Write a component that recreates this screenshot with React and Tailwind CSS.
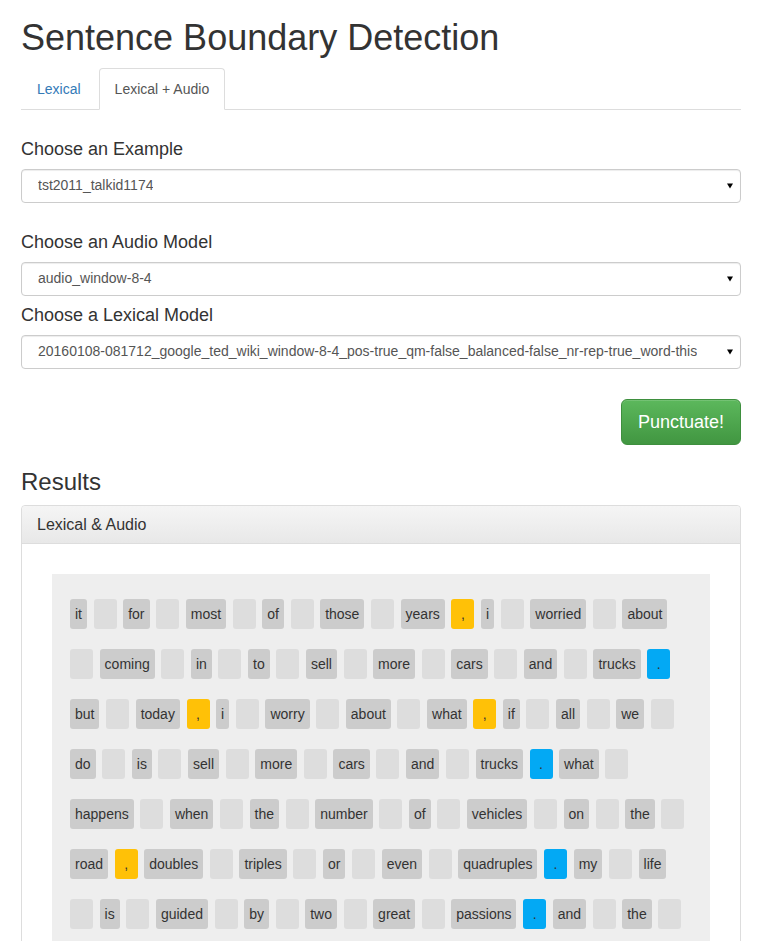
import React from 'react';

const rows = [
  ['it', '_', 'for', '_', 'most', '_', 'of', '_', 'those', '_', 'years', ',', 'i', '_', 'worried', '_', 'about'],
  ['_', 'coming', '_', 'in', '_', 'to', '_', 'sell', '_', 'more', '_', 'cars', '_', 'and', '_', 'trucks', '.'],
  ['but', '_', 'today', ',', 'i', '_', 'worry', '_', 'about', '_', 'what', ',', 'if', '_', 'all', '_', 'we', '_'],
  ['do', '_', 'is', '_', 'sell', '_', 'more', '_', 'cars', '_', 'and', '_', 'trucks', '.', 'what', '_'],
  ['happens', '_', 'when', '_', 'the', '_', 'number', '_', 'of', '_', 'vehicles', '_', 'on', '_', 'the', '_'],
  ['road', ',', 'doubles', '_', 'triples', '_', 'or', '_', 'even', '_', 'quadruples', '.', 'my', '_', 'life'],
  ['_', 'is', '_', 'guided', '_', 'by', '_', 'two', '_', 'great', '_', 'passions', '.', 'and', '_', 'the', '_'],
];

const Token = ({ t }) => {
  if (t === '_') return <span className="h-[30px] w-[23px] shrink-0 rounded-[3px] bg-[#dddddd]"></span>;
  if (t === ',')
    return <span className="h-[30px] w-[23px] shrink-0 rounded-[3px] bg-[#ffc107] text-center leading-[30px]">,</span>;
  if (t === '.')
    return <span className="h-[30px] w-[23px] shrink-0 rounded-[3px] bg-[#03a9f4] text-center leading-[30px]">.</span>;
  return <span className="h-[30px] shrink-0 rounded-[3px] bg-[#cccccc] px-[5px] leading-[30px]">{t}</span>;
};

const SelectBox = ({ value }) => (
  <div className="flex h-[34px] items-center justify-between rounded-[4px] border border-[#cccccc] bg-white pl-[16px] pr-[7px] text-[14px] text-[#555555] shadow-[inset_0_1px_1px_rgba(0,0,0,0.075)]">
    <span className="truncate">{value}</span>
    <svg width="6" height="6" viewBox="0 0 6 6" className="ml-2 shrink-0">
      <path d="M0 0.5 L6 0.5 L3 5.5 Z" fill="#000" />
    </svg>
  </div>
);

export default function App() {
  return (
    <div className="min-h-screen bg-white font-['Liberation_Sans',Arial,sans-serif] text-[#333333]">
      <div className="ml-[21px] w-[720px] pt-[18px]">
        <h1 className="mb-[10px] text-[36px] leading-[39.6px]">Sentence Boundary Detection</h1>

        {/* tabs */}
        <div className="flex border-b border-[#dddddd] text-[14px]">
          <a className="mr-[2px] mb-[-1px] rounded-t-[4px] border border-transparent px-[15px] py-[10px] leading-[20px] text-[#337ab7]">
            Lexical
          </a>
          <a className="mb-[-1px] rounded-t-[4px] border border-[#dddddd] border-b-white bg-white px-[15px] py-[10px] leading-[20px] text-[#555555]">
            Lexical + Audio
          </a>
        </div>

        <h4 className="mt-[29px] mb-[10px] text-[18px] leading-[20px]">Choose an Example</h4>
        <SelectBox value="tst2011_talkid1174" />

        <h4 className="mt-[29px] mb-[10px] text-[18px] leading-[20px]">Choose an Audio Model</h4>
        <SelectBox value="audio_window-8-4" />
        <h4 className="mt-[9px] mb-[10px] text-[18px] leading-[20px]">Choose a Lexical Model</h4>
        <SelectBox value="20160108-081712_google_ted_wiki_window-8-4_pos-true_qm-false_balanced-false_nr-rep-true_word-this" />

        <div className="mt-[30px] flex justify-end">
          <button className="rounded-[6px] border border-[#3e8f3e] bg-gradient-to-b from-[#5cb85c] to-[#419641] px-[16px] py-[10px] text-[18px] leading-[24px] text-white shadow-[inset_0_1px_0_rgba(255,255,255,0.15)]">
            Punctuate!
          </button>
        </div>

        <h3 className="mt-[24px] mb-[10px] text-[24px] leading-[26.4px]">Results</h3>

        <div className="rounded-[4px] border border-[#dddddd]">
          <div className="rounded-t-[4px] border-b border-[#dddddd] bg-gradient-to-b from-[#f5f5f5] to-[#e8e8e8] px-[15px] py-[10px] text-[16px] leading-[17px]">
            Lexical &amp; Audio
          </div>
          <div className="p-[30px]">
            <div className="flex flex-col gap-[20px] bg-[#eeeeee] px-[18px] pt-[25px] pb-[25px] text-[14px]">
              {rows.map((row, r) => (
                <div key={r} className="flex gap-x-[6.6px]">
                  {row.map((t, i) => (
                    <Token key={i} t={t} />
                  ))}
                </div>
              ))}
            </div>
          </div>
        </div>
      </div>
    </div>
  );
}
